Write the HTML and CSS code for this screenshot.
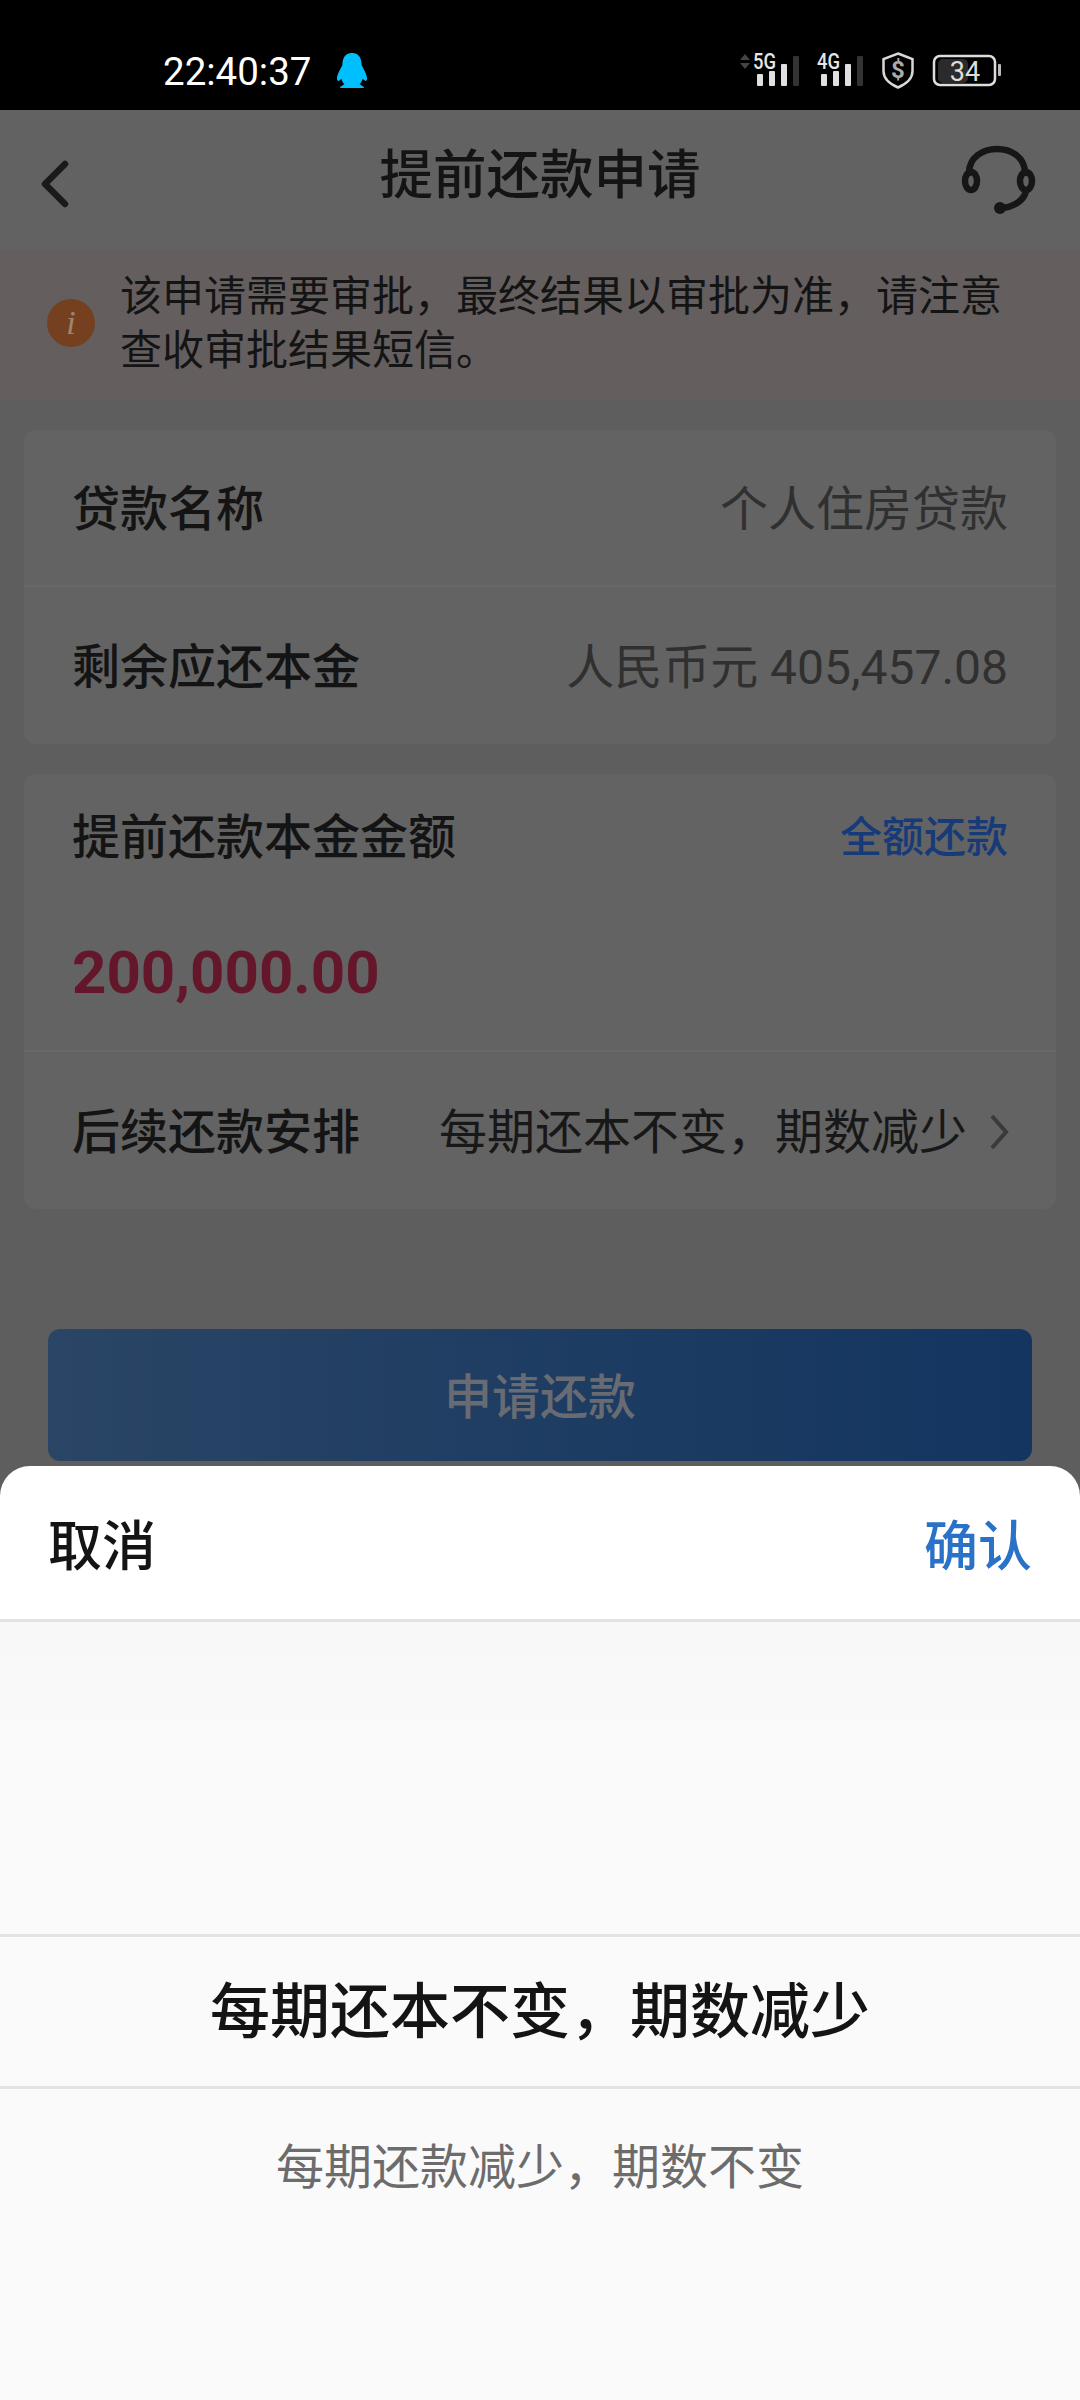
FILE: index.html
```html
<!DOCTYPE html>
<html lang="zh-CN">

<head>
    <meta charset="UTF-8">
    <meta name="viewport" content="width=device-width, initial-scale=1.0">
    <title>提前还款申请</title>
    <link rel="stylesheet" href="styles.css">
</head>

<body>
    <div class="status_bar">
        <span class="time">22:40:37</span>
        <svg class="qq_icon" width="30" height="35" viewBox="0 0 28 34" preserveAspectRatio="none">
            <path fill="#00bfff" d="M14 0C7 0 5 6 5 12C3 16 0 21 0 25C0 27 1.5 28 3 26L4 25C5 28 6 30 7 30L3 33V34H25V33L21 30C22 30 23 28 24 25L25 26C26.5 28 28 27 28 25C28 21 25 16 23 12C23 6 21 0 14 0Z" />
        </svg>
        <svg class="status_icons" width="270" height="42" viewBox="735 50 270 42">
            <path fill="#444" d="M745 54l5 6h-10zM745 69l-5-6h10z" />
            <text class="net" x="753" y="69" textLength="23" lengthAdjust="spacingAndGlyphs">5G</text>
            <rect class="bar" x="757" y="74" width="6" height="12" rx="1" />
            <rect class="bar" x="769" y="71" width="6" height="15" rx="1" />
            <rect class="bar" x="781" y="64" width="6" height="22" rx="1" />
            <rect class="bar_off" x="793" y="56" width="6" height="30" rx="1" />
            <text class="net" x="817" y="69" textLength="23" lengthAdjust="spacingAndGlyphs">4G</text>
            <rect class="bar" x="821" y="74" width="6" height="12" rx="1" />
            <rect class="bar" x="833" y="71" width="6" height="15" rx="1" />
            <rect class="bar" x="845" y="64" width="6" height="22" rx="1" />
            <rect class="bar_off" x="857" y="56" width="6" height="30" rx="1" />
            <path class="shield" d="M898 53.500L912.500 59V71C912.500 79 905 84.500 898 87.500C891 84.500 883.500 79 883.500 71V59Z" />
            <text class="dollar" x="898" y="78" text-anchor="middle">$</text>
            <rect x="938" y="59" width="30" height="24" rx="5" fill="#2b2b2b" />
            <rect class="batt" x="934" y="56" width="61" height="29" rx="6" />
            <rect x="998" y="64" width="3" height="12" rx="1" fill="#bbb" />
            <text class="batt_num" x="965" y="80.500" text-anchor="middle">34</text>
        </svg>
    </div>

    <div class="nav">
        <svg class="back_icon" width="30" height="48" viewBox="0 0 30 48">
            <path d="M25 4L5 24L25 44" fill="none" stroke="#1a1a1a" stroke-width="6.500" stroke-linecap="round" stroke-linejoin="round" />
        </svg>
        <div class="nav_title">提前还款申请</div>
        <svg class="help_icon" width="90" height="78" viewBox="0 0 90 78">
            <g fill="none" stroke="#161616" stroke-width="6.500">
                <path d="M19 32C19 0 75 0 75 32" stroke-linecap="round" />
                <ellipse cx="21" cy="40" rx="6" ry="9" />
                <ellipse cx="76" cy="40" rx="6" ry="9" />
                <path d="M76 50C74 60 62 67 50 67" stroke-linecap="round" />
            </g>
            <circle cx="50" cy="67" r="6" fill="#161616" />
        </svg>
    </div>

    <div class="notice">
        <div class="info_icon">i</div>
        <p class="notice_text">该申请需要审批，最终结果以审批为准，请注意查收审批结果短信。</p>
    </div>

    <div class="card first_card">
        <div class="row row_line">
            <span class="label">贷款名称</span>
            <span class="value">个人住房贷款</span>
        </div>
        <div class="row">
            <span class="label">剩余应还本金</span>
            <span class="value">人民币元 405,457.08</span>
        </div>
    </div>

    <div class="card">
        <div class="amount_box row_line">
            <div class="amount_head">
                <span class="label">提前还款本金金额</span>
                <span class="link">全额还款</span>
            </div>
            <div class="amount">200,000.00</div>
        </div>
        <div class="row">
            <span class="label">后续还款安排</span>
            <span class="value value_pick">每期还本不变，期数减少
                <svg class="arrow" width="20" height="38" viewBox="0 0 20 38">
                    <path d="M3 3L17 19L3 35" fill="none" stroke="#3a3a3a" stroke-width="4" />
                </svg>
            </span>
        </div>
    </div>

    <div class="btn">申请还款</div>

    <div class="sheet">
        <div class="sheet_head">
            <span class="cancel">取消</span>
            <span class="ok">确认</span>
        </div>
        <div class="picker">
            <div class="pick_space"></div>
            <div class="pick_on">每期还本不变，期数减少</div>
            <div class="pick_off">每期还款减少，期数不变</div>
        </div>
    </div>
</body>

</html>
```

FILE: styles.css
```css
* {
    box-sizing: border-box;
}

body {
    margin: 0;
    width: 1080px;
    height: 2400px;
    position: relative;
    overflow: hidden;
    background-color: #5e5e5f;
    color: #141414;
    font-family: Roboto, "Noto Sans CJK SC", sans-serif;
}

.status_bar {
    display: flex;
    align-items: flex-start;
    height: 110px;
    padding: 52px 75px 0 163px;
    background-color: #000;
}

.time {
    color: #fff;
    font-size: 38.500px;
    line-height: 40px;
}

.qq_icon {
    margin: 1px 0 0 26px;
}

.status_icons {
    margin: -2px 0 0 auto;
}

.net {
    fill: #e6e6e6;
    font-size: 22px;
    font-weight: 500;
}

.bar {
    fill: #e0e0e0;
}

.bar_off {
    fill: #333;
}

.shield {
    fill: none;
    stroke: #d8d8d8;
    stroke-width: 2.500;
}

.dollar {
    fill: #aaa;
    font-size: 24px;
    font-weight: 700;
}

.batt {
    fill: none;
    stroke: #ddd;
    stroke-width: 2.500;
}

.batt_num {
    fill: #ddd;
    font-size: 27px;
}

.nav {
    display: grid;
    grid-template-columns: 1fr auto 1fr;
    align-items: start;
    height: 140px;
    padding: 0 40px;
    background-color: #626262;
}

.back_icon {
    margin-top: 50px;
}

.nav_title {
    margin-top: 34px;
    font-size: 53.500px;
    font-weight: 500;
    line-height: 64px;
    text-align: center;
}

.help_icon {
    justify-self: end;
    margin-top: 31px;
}

.notice {
    display: flex;
    align-items: center;
    height: 150px;
    padding: 0 0 3px 47px;
    background-color: #645e5e;
}

.info_icon {
    flex: none;
    width: 48px;
    height: 48px;
    margin-top: -2px;
    border-radius: 50%;
    background-color: #74401f;
    color: #a08470;
    font-family: "Liberation Serif", serif;
    font-size: 34px;
    font-style: italic;
    line-height: 48px;
    text-align: center;
}

.notice_text {
    width: 890px;
    margin: 0 0 0 25px;
    font-size: 42px;
    line-height: 54px;
}

.card {
    margin: 30px 24px 0;
    border-radius: 12px;
    background-color: #636363;
}

.row {
    display: flex;
    align-items: center;
    justify-content: space-between;
    height: 157px;
    padding: 0 48px 5px;
}

.row_line {
    border-bottom: 2px solid #686868;
}

.label {
    font-size: 48px;
    font-weight: 500;
}

.value {
    color: #303030;
    font-size: 48px;
}

.value_pick {
    display: flex;
    align-items: center;
    color: #181818;
}

.arrow {
    margin: 8px -1px 0 22px;
}

.amount_box {
    height: 278px;
    padding: 30px 48px 0;
}

.amount_head {
    display: flex;
    align-items: center;
    justify-content: space-between;
    height: 58px;
}

.link {
    color: #173a78;
    font-size: 42px;
    font-weight: 500;
}

.amount {
    margin-top: 76px;
    color: #64172a;
    font-size: 60px;
    font-weight: 700;
    line-height: 70px;
}

.btn {
    height: 132px;
    margin: 120px 48px 0;
    border-radius: 12px;
    background: linear-gradient(to right, #2a4565, #133560);
    color: #686c72;
    font-size: 48px;
    font-weight: 500;
    line-height: 137px;
    text-align: center;
}

/* bottom sheet sits over the dimmed page */
.sheet {
    position: absolute;
    left: 0;
    right: 0;
    top: 1466px;
    bottom: 0;
    border-radius: 30px 30px 0 0;
    background-color: #fff;
}

.sheet_head {
    display: flex;
    align-items: center;
    justify-content: space-between;
    height: 153px;
    padding: 0 48px;
    font-size: 54px;
}

.cancel {
    font-weight: 500;
}

.ok {
    color: #2a72c8;
    font-weight: 500;
}

.picker {
    height: 781px;
    border-top: 3px solid #e3e3e3;
    background: linear-gradient(to bottom, #f8f8f8, #fafafa 130px);
    text-align: center;
}

.pick_space {
    height: 312px;
}

.pick_on {
    height: 155px;
    border-top: 3px solid #e3e3e3;
    border-bottom: 3px solid #e3e3e3;
    font-size: 60px;
    font-weight: 500;
    line-height: 151px;
}

.pick_off {
    color: #6c6c6c;
    font-size: 48px;
    line-height: 158px;
}
```
